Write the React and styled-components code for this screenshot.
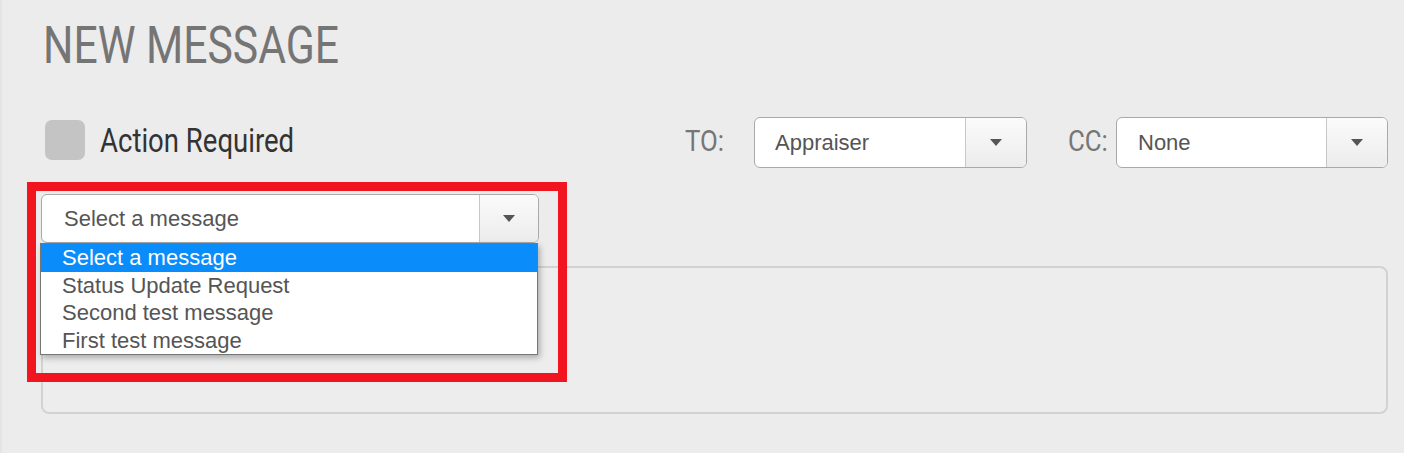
import React from "react";
import styled, { createGlobalStyle } from "styled-components";

const GlobalStyle = createGlobalStyle`
  html, body {
    margin: 0;
    padding: 0;
    background: #ececec;
    font-family: "Liberation Sans", Arial, sans-serif;
  }
  * { box-sizing: border-box; }
`;

const Page = styled.div`
  position: relative;
  width: 1404px;
  height: 453px;
  padding: 19px 16px 0 39px;
  border-left: 2px solid #e4e4e4;
  background: #ececec;
  overflow: hidden;
`;

const Condensed = styled.span`
  display: inline-block;
  white-space: nowrap;
  font-family: Roboto, "Liberation Sans", sans-serif;
  transform: scaleX(${(p) => p.$scale || 0.82});
  transform-origin: left center;
`;

const Heading = styled.h1`
  margin: 0 0 0 2px;
  height: 52px;
  line-height: 52px;
  font-size: 52px;
  font-weight: 400;
  color: #757575;
`;

const ControlsRow = styled.div`
  display: flex;
  align-items: center;
  justify-content: space-between;
  margin-top: 46px;
  height: 51px;
`;

const CheckGroup = styled.label`
  display: flex;
  align-items: center;
  padding-left: 4px;
  margin-top: -5px;
`;

const CheckBox = styled.span`
  width: 40px;
  height: 40px;
  border-radius: 7px;
  background: #c4c4c4;
  margin-right: 15px;
`;

const CheckLabel = styled.span`
  font-size: 34px;
  line-height: 40px;
  font-weight: 400;
  color: #333333;
`;

const RecipientGroup = styled.div`
  display: flex;
  align-items: center;
`;

const FieldLabel = styled.span`
  width: ${(p) => p.$w}px;
  margin-left: ${(p) => p.$ml || 0}px;
  margin-right: ${(p) => p.$mr}px;
  font-size: 30px;
  line-height: 40px;
  color: #767676;
  margin-top: -4px;
`;

const SelectBox = styled.div`
  display: flex;
  width: ${(p) => p.$w}px;
  height: ${(p) => p.$h}px;
  background: #ffffff;
  border: 1px solid #a9a9a9;
  border-radius: 6px;
  overflow: hidden;
`;

const SelectValue = styled.div`
  flex: 1;
  display: flex;
  align-items: center;
  padding-left: ${(p) => p.$pl || 20}px;
  font-size: 22px;
  color: #555555;
`;

const SelectButton = styled.div`
  width: ${(p) => p.$w}px;
  display: flex;
  align-items: center;
  justify-content: center;
  border-left: 1px solid #c8c8c8;
  background: linear-gradient(#fbfbfb, #ececec);
`;

const MessageArea = styled.div`
  position: relative;
  margin-top: 26px;
  width: 498px;
`;

const DropList = styled.ul`
  position: absolute;
  top: 49px;
  left: -1px;
  width: 498px;
  margin: 0;
  padding: 0;
  list-style: none;
  background: #ffffff;
  border: 1px solid #767676;
  box-shadow: 2px 3px 6px rgba(0, 0, 0, 0.28);
  z-index: 2;
`;

const DropItem = styled.li`
  height: 27.5px;
  line-height: 27px;
  padding-left: 21px;
  font-size: 22px;
  color: ${(p) => (p.$active ? "#ffffff" : "#555555")};
  background: ${(p) => (p.$active ? "#0a8cfb" : "transparent")};
`;

const Highlight = styled.div`
  position: absolute;
  left: -14px;
  top: -12px;
  width: 540px;
  height: 200px;
  border: 9px solid #f0151f;
  z-index: 3;
  pointer-events: none;
`;

const TextArea = styled.div`
  margin-top: 23px;
  width: 1347px;
  height: 148px;
  border: 2px solid #d2d2d2;
  border-radius: 8px;
  background: #ededed;
`;

const Caret = () => (
  <svg width="12" height="7" viewBox="0 0 12 7">
    <path d="M0 0 H12 L6 7 Z" fill="#555555" />
  </svg>
);

const Select = ({ value, w, h, btn, pl }) => (
  <SelectBox $w={w} $h={h}>
    <SelectValue $pl={pl}>{value}</SelectValue>
    <SelectButton $w={btn}>
      <Caret />
    </SelectButton>
  </SelectBox>
);

const options = [
  "Select a message",
  "Status Update Request",
  "Second test message",
  "First test message",
];

export default function App() {
  return (
    <>
      <GlobalStyle />
      <Page>
        <Heading>
          <Condensed $scale={0.82}>NEW MESSAGE</Condensed>
        </Heading>
        <ControlsRow>
          <CheckGroup>
            <CheckBox />
            <CheckLabel>
              <Condensed $scale={0.81}>Action Required</Condensed>
            </CheckLabel>
          </CheckGroup>
          <RecipientGroup>
            <FieldLabel $w={42} $mr={27}>
              <Condensed $scale={0.86}>TO:</Condensed>
            </FieldLabel>
            <Select value="Appraiser" w={273} h={51} btn={61} pl={20} />
            <FieldLabel $w={41} $ml={41} $mr={7}>
              <Condensed $scale={0.86}>CC:</Condensed>
            </FieldLabel>
            <Select value="None" w={272} h={51} btn={61} pl={21} />
          </RecipientGroup>
        </ControlsRow>
        <MessageArea>
          <Select value="Select a message" w={498} h={49} btn={59} pl={22} />
          <DropList>
            {options.map((o, i) => (
              <DropItem key={o} $active={i === 0}>
                {o}
              </DropItem>
            ))}
          </DropList>
          <Highlight />
        </MessageArea>
        <TextArea />
      </Page>
    </>
  );
}
